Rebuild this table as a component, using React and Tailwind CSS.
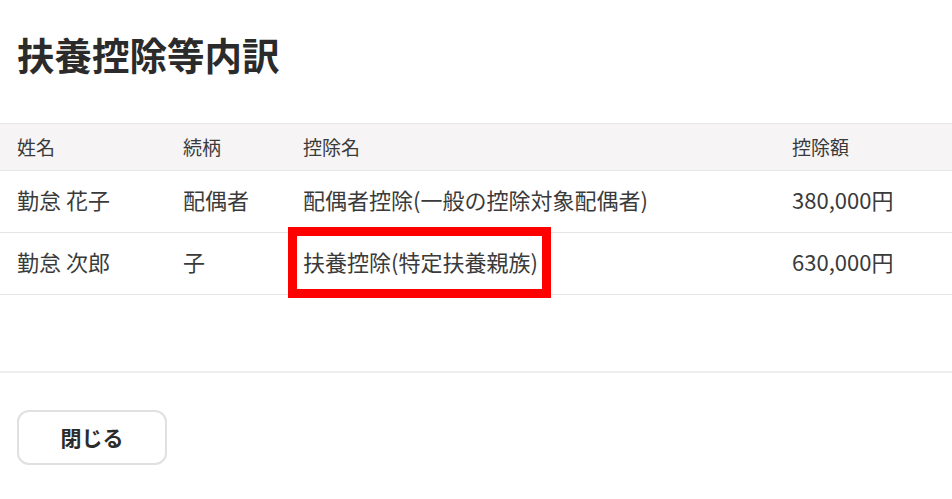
export default function App() {
  const font = { fontFamily: '"Noto Sans CJK JP", "Noto Sans", sans-serif' };
  const rows = [
    ["勤怠 花子", "配偶者", "配偶者控除(一般の控除対象配偶者)", "380,000円"],
    ["勤怠 次郎", "子", "扶養控除(特定扶養親族)", "630,000円"],
  ];
  return (
    <div className="w-[952px] h-[499px] bg-white text-[#333] overflow-hidden" style={font}>
      <h1 className="pl-[17px] pt-[29px] h-[123px] text-[37.5px] leading-[50px] font-bold text-[#2b2b2b]">扶養控除等内訳</h1>
      <div className="border-t border-[#e6e6e6]">
        <div className="grid grid-cols-[166px_120px_489px_1fr] pl-[17px] h-[47px] items-center bg-[#f6f4f5] border-b border-[#e6e6e6] text-[19px] text-[#3a3a3a]">
          <div>姓名</div>
          <div>続柄</div>
          <div>控除名</div>
          <div>控除額</div>
        </div>
        {rows.map((r, i) => (
          <div key={i} className="relative grid grid-cols-[166px_120px_489px_1fr] pl-[17px] pb-[4px] h-[62px] items-center border-b border-[#e6e6e6] text-[22px] text-[#3a3a3a]">
            <div>{r[0]}</div>
            <div>{r[1]}</div>
            <div>{r[2]}</div>
            <div>{r[3]}</div>
            {i === 1 && (
              <div className="absolute left-[288px] top-[-6px] w-[263px] h-[71px] border-[9px] border-[#ff0000]" />
            )}
          </div>
        ))}
      </div>
      <div className="h-[76px]" />
      <div className="border-t-2 border-[#eeeeee]" />
      <div className="pl-[17px] pt-[37px]">
        <button className="w-[150px] h-[55px] rounded-[12px] border-2 border-[#e0e0e0] bg-white text-[21px] font-bold text-[#2b2b2b]">閉じる</button>
      </div>
    </div>
  );
}
